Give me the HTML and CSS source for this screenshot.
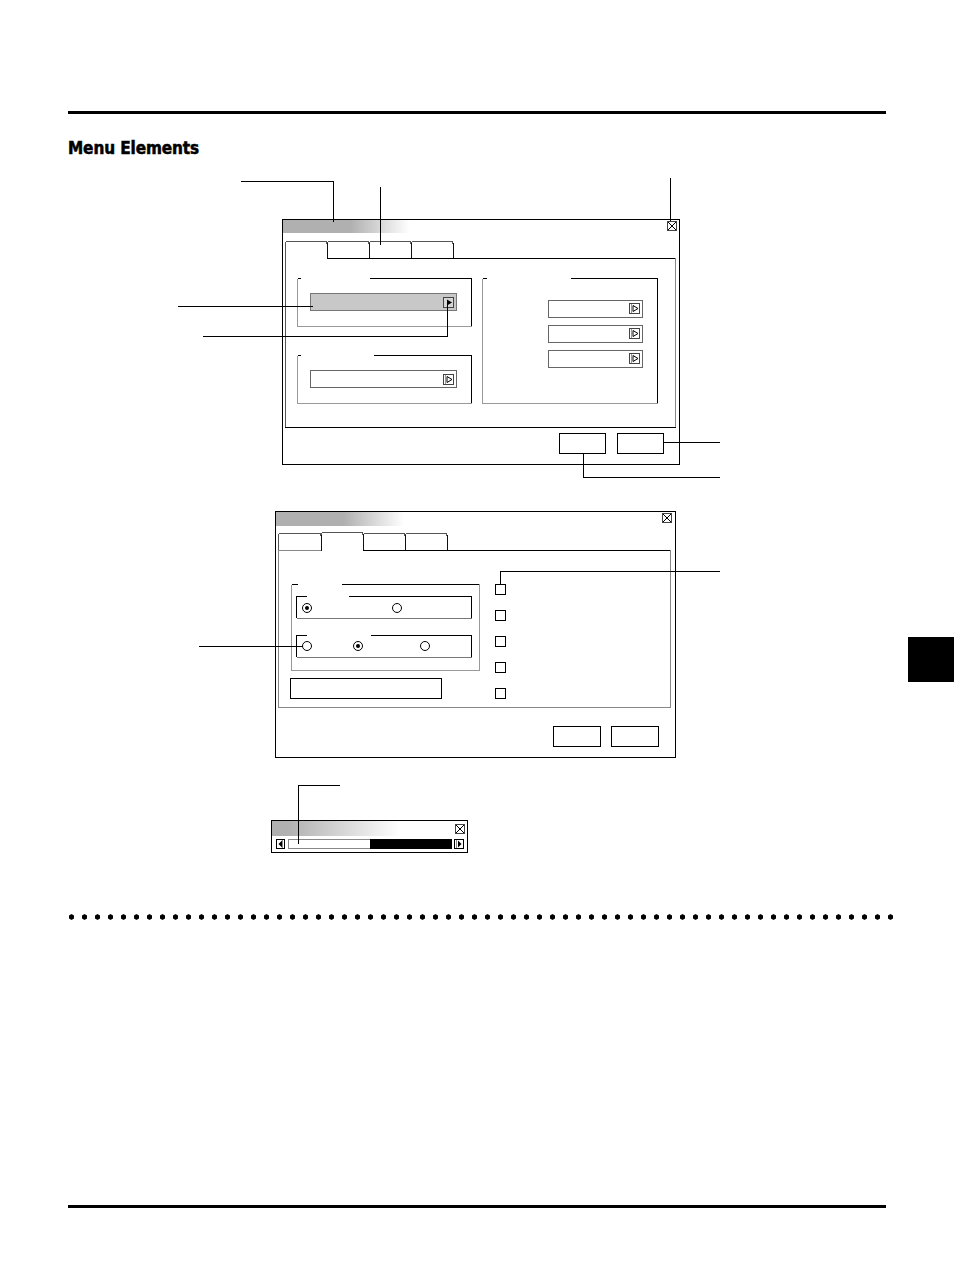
FILE: index.html
```html
<!DOCTYPE html>
<html lang="en">
<head>
<meta charset="utf-8">
<title>Menu Elements</title>
<link rel="stylesheet" href="styles.css">
</head>
<body>
<div class="sheet">
  <header class="head">
    <div class="rule rule-top"></div>
    <h2 class="title">Menu Elements</h2>
  </header>

  <svg class="diagram" width="954" height="730" viewBox="0 170 954 730" shape-rendering="crispEdges" xmlns="http://www.w3.org/2000/svg">
    <defs>
      <linearGradient id="g1" gradientUnits="userSpaceOnUse" x1="283" y1="0" x2="679" y2="0">
        <stop offset="0.17" stop-color="#b0b0b0"/>
        <stop offset="0.32" stop-color="#ffffff"/>
      </linearGradient>
      <linearGradient id="g2" gradientUnits="userSpaceOnUse" x1="276" y1="0" x2="675" y2="0">
        <stop offset="0.17" stop-color="#b0b0b0"/>
        <stop offset="0.32" stop-color="#ffffff"/>
      </linearGradient>
      <linearGradient id="g3" gradientUnits="userSpaceOnUse" x1="272" y1="0" x2="467" y2="0">
        <stop offset="0.08" stop-color="#b0b0b0"/>
        <stop offset="0.66" stop-color="#ffffff"/>
      </linearGradient>
    </defs>

    <!-- ===== Dialog 1 ===== -->
    <g class="dlg1">
      <rect x="282.5" y="219.5" width="397" height="245" fill="#fff" stroke="#000"/>
      <rect x="283" y="220" width="396" height="13" fill="url(#g1)"/>
      <g class="close">
        <rect x="667.5" y="221.5" width="9" height="9" fill="#fff" stroke="#444"/>
        <path d="M668 222 L676 230 M676 222 L668 230" stroke="#000" fill="none" shape-rendering="auto"/>
      </g>
      <!-- tabs -->
      <g fill="none" stroke="#555">
        <path d="M285.5 258.5 V243.5 Q285.5 241.5 287.5 241.5 H325 Q327 241.5 327 243.5"/>
        <path d="M327.5 258.5 V243.5 Q327.5 241.5 329.5 241.5 H367 Q369 241.5 369 243.5"/>
        <path d="M369.5 258.5 V243.5 Q369.5 241.5 371.5 241.5 H409 Q411 241.5 411 243.5"/>
        <path d="M411.5 258.5 V243.5 Q411.5 241.5 413.5 241.5 H451 Q453 241.5 453 243.5"/>
      </g>
      <g fill="none" stroke="#111">
        <path d="M327.5 243 V258.5"/>
        <path d="M369.5 243 V258.5"/>
        <path d="M411.5 243 V258.5"/>
        <path d="M453.5 243 V258.5"/>
      </g>
      <!-- panel -->
      <path d="M327 258.5 H675" stroke="#000" fill="none"/>
      <path d="M675.5 258 V427" stroke="#888" fill="none"/>
      <path d="M285.5 258 V427.5" stroke="#555" fill="none"/>
      <path d="M285 427.5 H676" stroke="#000" fill="none"/>

      <!-- group box 1 -->
      <path d="M297.5 278.5 H301 M370 278.5 H471.5 V326" stroke="#000" fill="none"/>
      <path d="M297.5 278.5 V326.5 H472" stroke="#999" fill="none"/>
      <rect x="310.5" y="293.5" width="146" height="17" fill="#c8c8c8" stroke="#777"/>
      <rect x="443.5" y="297.5" width="10" height="10" fill="#d6d6d6" stroke="#444"/>
      <polygon points="447,299.5 452,302.5 447,305.5" fill="#000" shape-rendering="auto"/>

      <!-- group box 2 -->
      <path d="M297.5 355.5 H301 M374 355.5 H471.5 V403" stroke="#000" fill="none"/>
      <path d="M297.5 355.5 V403.5 H472" stroke="#999" fill="none"/>
      <rect x="310.5" y="370.5" width="146" height="17" fill="#fff" stroke="#666"/>
      <g class="arrow-btn">
        <rect x="443.5" y="374.5" width="10" height="10" fill="#fff" stroke="#444"/>
        <path d="M445.5 375 V384" stroke="#999" fill="none"/>
        <polygon points="447,376.5 452,379.5 447,382.5" fill="none" stroke="#000" shape-rendering="auto"/>
      </g>

      <!-- group box 3 -->
      <path d="M482.5 278.5 H487 M571 278.5 H657.5 V403" stroke="#000" fill="none"/>
      <path d="M482.5 278.5 V403.5 H658" stroke="#999" fill="none"/>
      <rect x="548.5" y="300.5" width="94" height="17" fill="#fff" stroke="#666"/>
      <rect x="548.5" y="325.5" width="94" height="17" fill="#fff" stroke="#666"/>
      <rect x="548.5" y="350.5" width="94" height="17" fill="#fff" stroke="#666"/>
      <g>
        <rect x="629.5" y="303.5" width="10" height="10" fill="#fff" stroke="#444"/>
        <path d="M631.5 304 V313" stroke="#999" fill="none"/>
        <polygon points="633,305.5 638,308.5 633,311.5" fill="none" stroke="#000" shape-rendering="auto"/>
        <rect x="629.5" y="328.5" width="10" height="10" fill="#fff" stroke="#444"/>
        <path d="M631.5 329 V338" stroke="#999" fill="none"/>
        <polygon points="633,330.5 638,333.5 633,336.5" fill="none" stroke="#000" shape-rendering="auto"/>
        <rect x="629.5" y="353.5" width="10" height="10" fill="#fff" stroke="#444"/>
        <path d="M631.5 354 V363" stroke="#999" fill="none"/>
        <polygon points="633,355.5 638,358.5 633,361.5" fill="none" stroke="#000" shape-rendering="auto"/>
      </g>

      <!-- buttons -->
      <rect x="559.5" y="433.5" width="46" height="20" fill="#fff" stroke="#000"/>
      <rect x="617.5" y="433.5" width="46" height="20" fill="#fff" stroke="#000"/>
    </g>

    <!-- callouts dialog 1 -->
    <g class="callouts" fill="none" stroke="#000">
      <path d="M241 181.5 H333.5 V222"/>
      <path d="M380.5 187 V245"/>
      <path d="M670.5 178 V221"/>
      <path d="M178 306.5 H313"/>
      <path d="M203 336.5 H447.5 V302"/>
      <path d="M664 442.5 H720"/>
      <path d="M583.5 453 V477.5 H720"/>
    </g>

    <!-- ===== Dialog 2 ===== -->
    <g class="dlg2">
      <rect x="275.5" y="511.5" width="400" height="246" fill="#fff" stroke="#000"/>
      <rect x="276" y="512" width="399" height="14" fill="url(#g2)"/>
      <g class="close">
        <rect x="662.5" y="513.5" width="9" height="9" fill="#fff" stroke="#444"/>
        <path d="M663 514 L671 522 M671 514 L663 522" stroke="#000" fill="none" shape-rendering="auto"/>
      </g>
      <g fill="none" stroke="#555">
        <path d="M278.5 550.5 V535.5 Q278.5 533.5 280.5 533.5 H319 Q321 533.5 321 535.5"/>
        <path d="M321.5 550.5 V534.5 Q321.5 532.5 323.5 532.5 H361 Q363 532.5 363 534.5"/>
        <path d="M363.5 550.5 V535.5 Q363.5 533.5 365.5 533.5 H403 Q405 533.5 405 535.5"/>
        <path d="M405.5 550.5 V535.5 Q405.5 533.5 407.5 533.5 H445 Q447 533.5 447 535.5"/>
      </g>
      <g fill="none" stroke="#111">
        <path d="M321.5 535 V550.5"/>
        <path d="M363.5 534 V550.5"/>
        <path d="M405.5 535 V550.5"/>
        <path d="M447.5 535 V550.5"/>
      </g>
      <path d="M278 550.5 H321" stroke="#888" fill="none"/>
      <path d="M363 550.5 H670" stroke="#000" fill="none"/>
      <path d="M278.5 550 V707.5 H671 M670.5 550 V707" stroke="#888" fill="none"/>

      <!-- outer group -->
      <path d="M291.5 584.5 H298 M342 584.5 H479" stroke="#000" fill="none"/>
      <path d="M291.5 584.5 V670.5 H479.5 V584" stroke="#999" fill="none"/>
      <!-- inner groups -->
      <path d="M296.5 618 V596.5 H307 M349 596.5 H471.5 V618" stroke="#000" fill="none"/>
      <path d="M296.5 618.5 H472" stroke="#777" fill="none"/>
      <path d="M296.5 657 V635.5 H307 M371 635.5 H471.5 V657" stroke="#000" fill="none"/>
      <path d="M296.5 657.5 H472" stroke="#777" fill="none"/>
      <g shape-rendering="auto">
        <circle cx="307" cy="608" r="4.5" fill="#fff" stroke="#000"/>
        <circle cx="307" cy="608" r="2" fill="#000"/>
        <circle cx="397" cy="608" r="4.5" fill="#fff" stroke="#000"/>
        <circle cx="307" cy="646" r="4.5" fill="#fff" stroke="#000"/>
        <circle cx="358" cy="646" r="4.5" fill="#fff" stroke="#000"/>
        <circle cx="358" cy="646" r="2" fill="#000"/>
        <circle cx="425" cy="646" r="4.5" fill="#fff" stroke="#000"/>
      </g>
      <rect x="290.5" y="678.5" width="151" height="20" fill="#fff" stroke="#000"/>
      <g fill="#fff" stroke="#000">
        <rect x="495.5" y="584.5" width="10" height="10"/>
        <rect x="495.5" y="610.5" width="10" height="10"/>
        <rect x="495.5" y="636.5" width="10" height="10"/>
        <rect x="495.5" y="662.5" width="10" height="10"/>
        <rect x="495.5" y="688.5" width="10" height="10"/>
      </g>
      <rect x="553.5" y="726.5" width="47" height="20" fill="#fff" stroke="#000"/>
      <rect x="611.5" y="726.5" width="47" height="20" fill="#fff" stroke="#000"/>
    </g>

    <g class="callouts" fill="none" stroke="#000">
      <path d="M720 571.5 H500.5 V585"/>
      <path d="M199 646.5 H303"/>
    </g>

    <!-- ===== Dialog 3 ===== -->
    <g class="dlg3">
      <rect x="271.5" y="820.5" width="196" height="32" fill="#fff" stroke="#000"/>
      <rect x="272" y="821" width="195" height="15" fill="url(#g3)"/>
      <g class="close">
        <rect x="455.5" y="824.5" width="9" height="9" fill="#fff" stroke="#444"/>
        <path d="M456 825 L464 833 M464 825 L456 833" stroke="#000" fill="none" shape-rendering="auto"/>
      </g>
      <rect x="276.5" y="839.5" width="8" height="9" fill="#fff" stroke="#000"/>
      <path d="M282.5 840 V848" stroke="#888" fill="none"/>
      <polygon points="282,840.5 278.5,844 282,847.5" fill="#000" shape-rendering="auto"/>
      <rect x="288.5" y="839.5" width="82" height="9" fill="#fff" stroke="#888"/>
      <rect x="370" y="839" width="82" height="10" fill="#000"/>
      <rect x="454.5" y="839.5" width="9" height="9" fill="#fff" stroke="#000"/>
      <path d="M456.5 840 V848" stroke="#888" fill="none"/>
      <polygon points="458,840.5 461.5,844 458,847.5" fill="#000" shape-rendering="auto"/>
    </g>
    <g class="callouts" fill="none" stroke="#000">
      <path d="M340 785.5 H298.5 V844"/>
    </g>
  </svg>

  <div class="dots"></div>
  <div class="rule rule-bottom"></div>

  <div class="thumb-tab"></div>
</div>
</body>
</html>
```

FILE: styles.css
```css
html, body {
  margin: 0;
  padding: 0;
  background: #fff;
}

.sheet {
  position: relative;
  width: 954px;
  height: 1274px;
  overflow: hidden;
  font-family: "DejaVu Sans Condensed", "DejaVu Sans", sans-serif;
}

.head {
  box-sizing: border-box;
  height: 170px;
  padding-top: 111px;
}

.rule {
  height: 3px;
  background: #000;
  margin: 0 68px;
  width: 818px;
}

.title {
  margin: 24px 0 0 68px;
  font-family: "DejaVu Sans Condensed", "DejaVu Sans", sans-serif;
  font-stretch: condensed;
  font-weight: bold;
  font-size: 17px;
  line-height: 20px;
  color: #000;
  letter-spacing: -0.1px;
  -webkit-text-stroke: 0.5px #000;
}

.diagram {
  display: block;
}

.dots {
  margin: 14px 0 0 65px;
  width: 832px;
  height: 6px;
  background-image: radial-gradient(circle at 6.5px 3px, #000 2.4px, rgba(0,0,0,0) 2.9px);
  background-size: 13px 6px;
  background-repeat: repeat-x;
}

.rule-bottom {
  margin-top: 285px;
}

.thumb-tab {
  position: absolute;
  top: 637px;
  right: 0;
  width: 46px;
  height: 45px;
  background: #000;
}
```
